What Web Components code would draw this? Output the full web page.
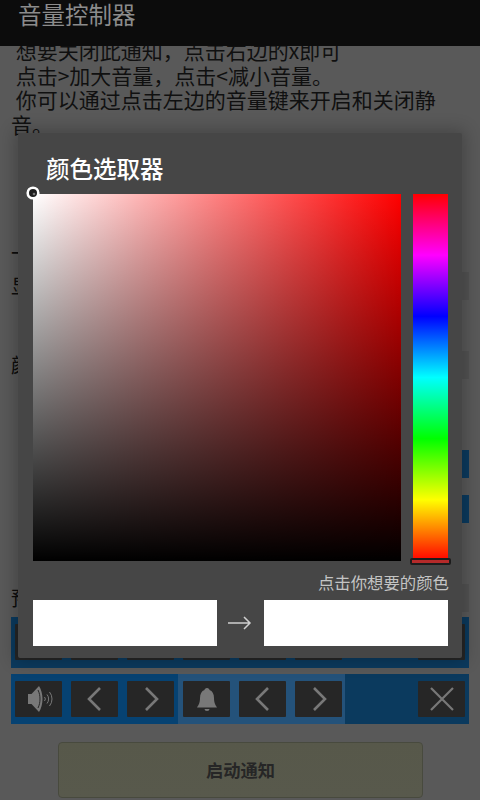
<!DOCTYPE html>
<html lang="zh"><head><meta charset="utf-8">
<style>
html,body{margin:0;padding:0;width:480px;height:800px;overflow:hidden;background:#595959}
body{font-family:"Noto Sans CJK SC","Noto Sans",sans-serif;position:relative}
</style></head><body>
<app-screen>
  <app-bar slot="bar">音量控制器</app-bar>
  <help-text>
    <span>&nbsp;想要关闭此通知，点击右边的x即可</span><br>
    <span>&nbsp;点击&gt;加大音量，点击&lt;减小音量。</span><br>
    <span>&nbsp;你可以通过点击左边的音量键来开启和关闭静音。</span>
  </help-text>
  <setting-row style="margin-top:106px" tone="transparent">一</setting-row>
  <setting-row style="margin-top:5px" tone="#525252">显</setting-row>
  <setting-row style="margin-top:51px" tone="#525252">颜</setting-row>
  <setting-row style="margin-top:71px" tone="#0b3a5e"></setting-row>
  <setting-row style="margin-top:17px" tone="#0b3a5e"></setting-row>
  <setting-row style="margin-top:61px" tone="#525252">预</setting-row>
  <control-strip style="margin-top:5px;height:51px" ghost></control-strip>
  <control-strip style="margin-top:6px"></control-strip>
  <start-button>启动通知</start-button>
</app-screen>
<color-dialog title-text="颜色选取器" hint="点击你想要的颜色"></color-dialog>
<script>
const def=(n,html,extra)=>{customElements.define(n,class extends HTMLElement{
  constructor(){super();this.attachShadow({mode:'open'}).innerHTML=html}
  connectedCallback(){extra&&extra.call(this)}
})};
def('app-screen',`<style>:host{display:block;width:480px;height:800px;overflow:hidden;position:relative}
.bar{position:relative;z-index:2}.body{margin-top:-8px}</style>
<div class="bar"><slot name="bar"></slot></div><div class="body"><slot></slot></div>`);
def('app-bar',`<style>:host{display:flex;align-items:flex-start;height:46px;background:#0c0c0c;color:#8c8c8c;font-size:23.5px;line-height:28px;padding-left:18px;box-sizing:border-box}</style><slot></slot>`);
def('help-text',`<style>:host{display:block;color:#101010;font-size:21px;line-height:24.5px;padding:0 18px 0 11px;height:95px}</style><slot></slot>`);
def('setting-row',`<style>:host{display:flex;height:28px;margin:0 11px;color:#0c0c0c;font-size:20px;line-height:28px;justify-content:space-between}
.end{width:8px;height:100%}</style><span><slot></slot></span><span class="end"></span>`,function(){
  this.shadowRoot.querySelector('.end').style.background=this.getAttribute('tone');
});
const C='#787878';
const ICON={
 vol:`<svg viewBox="0 0 46 36" width="46" height="36"><path d="M12 13h3.500l7.500-8c2 3 3.500 8 3.500 13s-1.500 10-3.500 13l-7.500-8H12z" fill="${C}"/><path d="M22 9c1.500 3 2 6 2 9s-.5 6-2 9" fill="none" stroke="#282828" stroke-width="1"/><path d="M28.500 16a3 3 0 0 1 0 4M31 13.500a7 7 0 0 1 0 9M33.500 11a11 11 0 0 1 0 14" fill="none" stroke="${C}" stroke-width="1"/></svg>`,
 l:`<svg viewBox="0 0 46 36" width="46" height="36"><polyline points="28,7 17,18 28,29" fill="none" stroke="${C}" stroke-width="2.600"/></svg>`,
 r:`<svg viewBox="0 0 46 36" width="46" height="36"><polyline points="18,7 29,18 18,29" fill="none" stroke="${C}" stroke-width="2.600"/></svg>`,
 bell:`<svg viewBox="0 0 46 36" width="46" height="36"><path d="M23 7c1.500 0 2.500 1 2.500 2 3 1 4.500 4 4.500 8 0 5 1.500 7 3 9.500H13c1.500-2.500 3-4.500 3-9.500 0-4 1.500-7 4.500-8 0-1 1-2 2.500-2z" fill="${C}"/><path d="M20.500 28h5a2.500 2 0 0 1-5 0z" fill="${C}"/></svg>`,
 x:`<svg viewBox="0 0 46 36" width="46" height="36"><path d="M12 7l22 22M34 7L12 29" stroke="${C}" stroke-width="2.200" fill="none"/></svg>`};
def('control-strip',`<style>:host{display:flex;margin:0 11px;height:50px;background:#0b3a5e;box-sizing:border-box}
.seg{display:flex;gap:9px;padding:7px 4px;width:167px;box-sizing:border-box}
.a{background:#064272}.b{background:#24527a;padding-left:5px}
:host([ghost]) .a,:host([ghost]) .b{background:transparent}
.sp{flex:1}.e{padding:7px 4px 7px 0}
i{display:block;width:47px;height:36px;background:#262626;border-radius:1px;flex:none}
i svg{display:block;margin:auto}
</style>
<div class="seg a"><i>${ICON.vol}</i><i>${ICON.l}</i><i>${ICON.r}</i></div>
<div class="seg b"><i>${ICON.bell}</i><i>${ICON.l}</i><i>${ICON.r}</i></div>
<div class="sp"></div><div class="seg e" style="width:auto"><i>${ICON.x}</i></div>`);
def('start-button',`<style>:host{display:flex;align-items:center;justify-content:center;box-sizing:border-box;width:365px;height:56px;margin:18px 0 0 58px;padding-bottom:2px;
background:linear-gradient(#57584a,#58594c);border:1px solid #484a3e;border-radius:4px;color:#262626;font-size:17.3px;font-weight:700}</style><slot></slot>`);
def('color-dialog',`<style>:host{position:absolute;left:18px;top:133px;width:444px;height:525px;background:#464646;border-radius:2px;box-shadow:0 0 16px 4px rgba(0,0,0,.22);box-sizing:border-box;padding:0 15px;display:flex;flex-direction:column;color:#fff}
h2{margin:0;padding-left:13px;height:61px;font-size:23.5px;font-weight:500;line-height:71px;color:#fff}
.pick{display:flex;gap:12px;height:367px;position:relative}
.sq{flex:none;width:368px;height:367px;background:linear-gradient(to bottom,transparent,#000),linear-gradient(to right,#fff,#f00)}
.hue{flex:none;width:35px;height:367px;position:relative;background:linear-gradient(to bottom,#f00,#f0f,#00f,#0ff,#0f0,#ff0,#f00)}
.track{position:absolute;left:-3px;right:-3px;bottom:-4px;height:7px;border-radius:2px;box-sizing:border-box;border:2px solid #1c1c1c;background:#b52a2a}
.thumb{position:absolute;left:-7px;top:-8px;width:14px;height:14px;display:block}
.hint{font-size:16.4px;line-height:22px;color:#c4c4c4;text-align:right;margin:10px -2px 0 0;height:29px}
.sw{display:flex;align-items:center}
.sw b{display:block;flex:none;height:46px;width:184px;background:#fff}
.sw svg{flex:none;width:47px;height:20px}
</style>
<h2></h2>
<div class="pick"><div class="sq"></div><div class="hue"><div class="track"></div></div><svg class="thumb" viewBox="0 0 14 14"><circle cx="7" cy="7" r="5.300" fill="#1e1e1e" stroke="#fff" stroke-width="2.600"/><circle cx="8" cy="8" r="1.300" fill="#777"/></svg></div>
<div class="hint"></div>
<div class="sw"><b></b><svg viewBox="0 0 47 20"><path d="M11 10h22M27 4l6 6-6 6" fill="none" stroke="#d0d0d0" stroke-width="1.500"/></svg><b></b></div>`,function(){
  this.shadowRoot.querySelector('h2').textContent=this.getAttribute('title-text');
  this.shadowRoot.querySelector('.hint').textContent=this.getAttribute('hint');
});
</script>
</body></html>
